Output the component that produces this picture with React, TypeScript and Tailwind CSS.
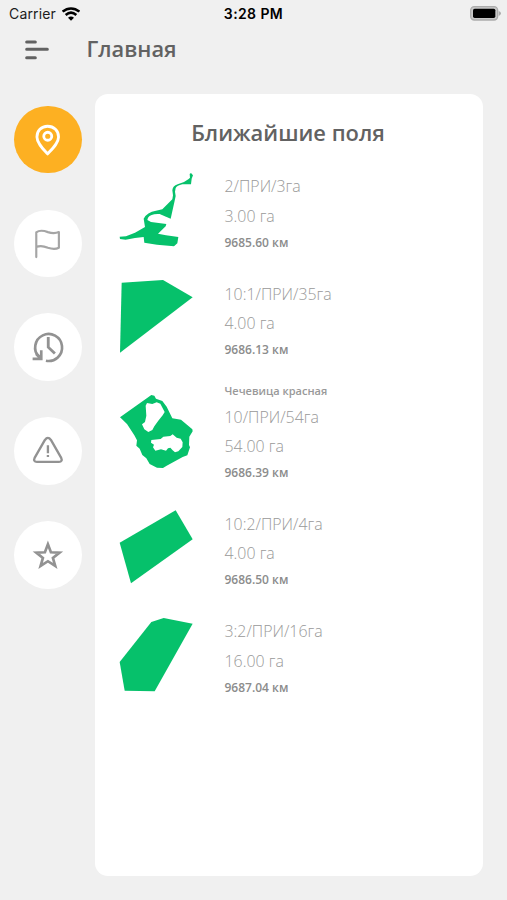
import type { ReactNode } from 'react';

type Field = {
  crop?: string;
  name: string;
  area: string;
  distance: string;
  viewBox: string;
  offset: string;
  path: string;
};

const fields: Field[] = [
  {
    name: '2/ПРИ/3га',
    area: '3.00 га',
    distance: '9685.60 км',
    viewBox: '30 24 219 222',
    offset: 'pt-[9px]',
    path: 'M243 24L249 31L245 41L243 58L217 58Q201 62 197 69L195 80L197 93L194 107L182 161L168 155L149 147Q123 145 114 158L112 165L123 171L169 177L167 184L144 206L168 211L205 216L202 235L192 244L141 239L103 233L101 216L75 219L47 224L30 222L29 215L48 214L75 203L105 186L101 161Q111 141 138 137L157 133L172 118L187 103L189 91L187 76Q188 63 203 58L222 51L236 42L240 38L239 27Z',
  },
  {
    name: '10:1/ПРИ/35га',
    area: '4.00 га',
    distance: '9686.13 км',
    viewBox: '30 30 219 222',
    offset: 'pt-[8.5px]',
    path: 'M35 38L159 30L248 82L30 248Z',
  },
  {
    crop: 'Чечевица красная',
    name: '10/ПРИ/54га',
    area: '54.00 га',
    distance: '9686.39 км',
    viewBox: '30 30 219 222',
    offset: 'pt-[16px]',
    path: 'M30 97L124 30L133 32L138 41L157 48L170 65L187 100L213 104L247 133L248 139L238 155L237 180L240 187L232 211L218 216L170 242L159 249L141 248L119 237L109 220L97 210L89 191L79 182L81 166L73 151L51 117ZM107 62L111 54L127 57L140 52L151 56L164 81L158 91L146 106L133 124L127 135L115 141L103 133L96 118L105 111L109 92ZM124 165L152 162L160 155L181 153L188 148L200 158L212 161L218 172L217 186L205 199L195 202L188 196L181 188L174 190L168 197L153 193L136 197L129 187L132 179L123 173Z',
  },
  {
    name: '10:2/ПРИ/4га',
    area: '4.00 га',
    distance: '9686.50 км',
    viewBox: '30 30 219 222',
    offset: 'pt-[8.5px]',
    path: 'M29 128L197 31L248 118L63 250Z',
  },
  {
    name: '3:2/ПРИ/16га',
    area: '16.00 га',
    distance: '9687.04 км',
    viewBox: '30 38 219 222',
    offset: 'pt-[8.5px]',
    path: 'M124 50L161 38L248 55L134 258L44 256L29 170Z',
  },
];

function Round({ active, viewBox, children }: { active?: boolean; viewBox: string; children: ReactNode }) {
  return (
    <button
      className={`flex size-[67.5px] shrink-0 items-center justify-center rounded-full ${
        active ? 'bg-[#fdb022] text-white' : 'bg-white text-[#929292]'
      }`}
    >
      <svg viewBox={viewBox} className="size-[67.5px]" fill="none" stroke="currentColor">
        {children}
      </svg>
    </button>
  );
}

function Sidebar() {
  return (
    <nav className="flex w-[95px] flex-col gap-[36.4px] pt-[11.7px] pl-[14.2px]">
      <Round active viewBox="42 46 203 203">
        <path
          d="M143 107C124 107 111 121 111 139C111 157 128 174 143 190C158 174 176 157 176 139C176 121 162 107 143 107Z"
          strokeWidth="8.500"
          strokeLinejoin="round"
        />
        <circle cx="143.500" cy="137" r="12" strokeWidth="8.500" />
      </Round>
      <Round viewBox="42 358.500 203 203">
        <path
          d="M109 500V426C119 418 133 421 144 425C156 429 167 429 177 425V472C167 477 156 476 144 472C132 467 120 465 109 470"
          stroke="#a5a5a5"
          strokeWidth="6.500"
          strokeLinecap="round"
          strokeLinejoin="round"
        />
      </Round>
      <Round viewBox="42 39 203 203">
        <path d="M117 171A40.500 40.500 0 1 1 138 182.500" strokeWidth="8" />
        <path d="M145 111V142L165 161" strokeWidth="8.500" />
        <path d="M120 151H128V181H98V173H114L106 165L112 158L120 166Z" fill="currentColor" stroke="none" />
      </Round>
      <Round viewBox="42 351 203 203">
        <path
          d="M135 420Q144 408 153 420L184 474Q189 485 177 486H111Q99 485 104 474Z"
          strokeWidth="7"
          strokeLinejoin="round"
        />
        <path d="M144 436V460M144 465V471" strokeWidth="7" />
      </Round>
      <Round viewBox="42 663 203 203">
        <path
          d="M144 733L153 757L179 758L159 774L166 798L144 784L122 798L129 774L109 758L135 757Z"
          strokeWidth="8"
        />
      </Round>
    </nav>
  );
}

function FieldRow({ field }: { field: Field }) {
  return (
    <li className={`flex items-start ${field.crop ? 'h-[122.5px]' : 'h-[107.5px] '}`}>
      <div className={`w-[104.5px] ${field.offset}`}>
        <svg viewBox={field.viewBox} className="block h-[74px] w-[73px] overflow-visible" fill="#06c16b">
          <path fillRule="evenodd" d={field.path} />
        </svg>
      </div>
      <div className={`text-[#999] ${field.crop ? '' : 'pt-[8.3px]'}`}>
        {field.crop && <p className="text-[11px] leading-[23.8px] font-semibold">{field.crop}</p>}
        <p className="text-[15.9px] leading-[29.3px] font-light">{field.name}</p>
        <p className="text-[15.9px] leading-[29.3px] font-light">{field.area}</p>
        <p className="text-[12px] leading-[23.4px] font-semibold text-[#8c8c8c]">{field.distance}</p>
      </div>
    </li>
  );
}

function StatusBar() {
  return (
    <div className="grid h-[27px] grid-cols-3 items-center pr-[6px] pl-[9px] font-['Inter',sans-serif] text-[14px] text-[#1c1c1c]">
      <div className="flex items-center gap-[6px]">
        <span className="tracking-[0.15px]">Carrier</span>
        <svg viewBox="0 0 54 42" className="h-[14px] w-[18px]" fill="none" stroke="#000" strokeWidth="7.500">
          <path d="M2 14C17 1 37 1 52 14M11 24C21 15 33 15 43 24" />
          <path d="M27 41L18 32Q27 25 36 32Z" fill="#000" stroke="none" />
        </svg>
      </div>
      <span className="pr-[3px] text-center font-semibold tracking-[0.4px] text-black">3:28 PM</span>
      <svg viewBox="0 0 93 45" className="h-[15px] w-[31px] justify-self-end">
        <rect x="2" y="2" width="81" height="40" rx="11" fill="#c8c8c8" stroke="#acacac" strokeWidth="4" />
        <rect x="9" y="8" width="67" height="28" rx="5" fill="#000" />
        <path d="M86 15Q93 18 93 22Q93 27 86 30Z" fill="#acacac" />
      </svg>
    </div>
  );
}

export default function App() {
  return (
    <div className="flex h-[900px] w-[507px] flex-col overflow-hidden bg-[#f0f0f0] font-['Open_Sans',sans-serif]">
      <StatusBar />
      <header className="flex h-[67px] items-start pl-[25px]">
        <svg viewBox="0 0 72 60" className="mt-[13px] h-5 w-6" fill="none" stroke="#626262" strokeWidth="9" strokeLinecap="round">
          <path d="M5 6H31M5 28H67M5 53H31" />
        </svg>
        <h1 className="ml-[37.5px] text-[21.8px] leading-[44px] font-semibold text-[#626262]">Главная</h1>
      </header>
      <div className="flex">
        <Sidebar />
        <main className="h-[782px] w-[388px] rounded-[13px] bg-white pl-[25px]">
          <h2 className="h-[70px] pt-[24px] pr-[27px] text-center text-[21.9px] leading-[30px] font-semibold text-[#626262]">
            Ближайшие поля
          </h2>
          <ul>
            {fields.map((field) => (
              <FieldRow key={field.name} field={field} />
            ))}
          </ul>
        </main>
      </div>
    </div>
  );
}
